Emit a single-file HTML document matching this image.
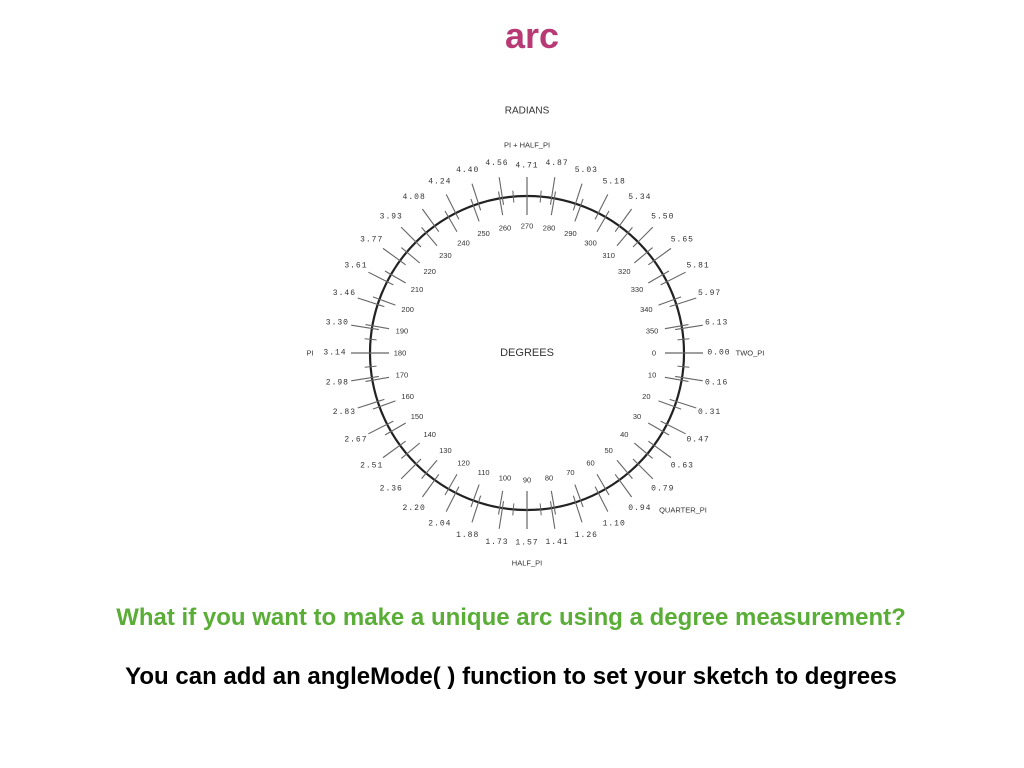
<!DOCTYPE html>
<html><head><meta charset="utf-8"><style>
body{margin:0;width:1024px;height:768px;background:#fff;overflow:hidden;font-family:"Liberation Sans",sans-serif}
.t{position:absolute;left:0;width:1024px;text-align:center;font-weight:bold}
</style></head><body>
<div class="t" style="top:15px;left:20px;font-size:36px;color:#b73a74">arc</div>
<svg width="1024" height="768" style="position:absolute;left:0;top:0">
<g transform="translate(527 353)" font-family="Liberation Mono, monospace" font-size="8" fill="#333" text-anchor="middle" dominant-baseline="central">
<circle r="157" fill="none" stroke="#222" stroke-width="2.2"/>
<g stroke="#666" stroke-width="1.2">
<line x1="138" y1="0" x2="176" y2="0" transform="rotate(0)"/><line x1="138" y1="0" x2="176" y2="0" transform="rotate(90)"/><line x1="138" y1="0" x2="176" y2="0" transform="rotate(180)"/><line x1="138" y1="0" x2="176" y2="0" transform="rotate(270)"/>
</g>
<g stroke="#666" stroke-width="1.1">
<line x1="140" x2="164" transform="rotate(10)"/><line x1="140" x2="164" transform="rotate(20)"/><line x1="140" x2="164" transform="rotate(30)"/><line x1="140" x2="164" transform="rotate(40)"/><line x1="140" x2="164" transform="rotate(50)"/><line x1="140" x2="164" transform="rotate(60)"/><line x1="140" x2="164" transform="rotate(70)"/><line x1="140" x2="164" transform="rotate(80)"/>
<line x1="140" x2="164" transform="rotate(100)"/><line x1="140" x2="164" transform="rotate(110)"/><line x1="140" x2="164" transform="rotate(120)"/><line x1="140" x2="164" transform="rotate(130)"/><line x1="140" x2="164" transform="rotate(140)"/><line x1="140" x2="164" transform="rotate(150)"/><line x1="140" x2="164" transform="rotate(160)"/><line x1="140" x2="164" transform="rotate(170)"/>
<line x1="140" x2="164" transform="rotate(190)"/><line x1="140" x2="164" transform="rotate(200)"/><line x1="140" x2="164" transform="rotate(210)"/><line x1="140" x2="164" transform="rotate(220)"/><line x1="140" x2="164" transform="rotate(230)"/><line x1="140" x2="164" transform="rotate(240)"/><line x1="140" x2="164" transform="rotate(250)"/><line x1="140" x2="164" transform="rotate(260)"/>
<line x1="140" x2="164" transform="rotate(280)"/><line x1="140" x2="164" transform="rotate(290)"/><line x1="140" x2="164" transform="rotate(300)"/><line x1="140" x2="164" transform="rotate(310)"/><line x1="140" x2="164" transform="rotate(320)"/><line x1="140" x2="164" transform="rotate(330)"/><line x1="140" x2="164" transform="rotate(340)"/><line x1="140" x2="164" transform="rotate(350)"/>
</g>
<g stroke="#666" stroke-width="1.1">
<line x1="150" x2="178" transform="rotate(9)"/><line x1="150" x2="178" transform="rotate(18)"/><line x1="150" x2="178" transform="rotate(27)"/><line x1="150" x2="178" transform="rotate(36)"/><line x1="150" x2="178" transform="rotate(45)"/><line x1="150" x2="178" transform="rotate(54)"/><line x1="150" x2="178" transform="rotate(63)"/><line x1="150" x2="178" transform="rotate(72)"/><line x1="150" x2="178" transform="rotate(81)"/>
<line x1="150" x2="178" transform="rotate(99)"/><line x1="150" x2="178" transform="rotate(108)"/><line x1="150" x2="178" transform="rotate(117)"/><line x1="150" x2="178" transform="rotate(126)"/><line x1="150" x2="178" transform="rotate(135)"/><line x1="150" x2="178" transform="rotate(144)"/><line x1="150" x2="178" transform="rotate(153)"/><line x1="150" x2="178" transform="rotate(162)"/><line x1="150" x2="178" transform="rotate(171)"/>
<line x1="150" x2="178" transform="rotate(189)"/><line x1="150" x2="178" transform="rotate(198)"/><line x1="150" x2="178" transform="rotate(207)"/><line x1="150" x2="178" transform="rotate(216)"/><line x1="150" x2="178" transform="rotate(225)"/><line x1="150" x2="178" transform="rotate(234)"/><line x1="150" x2="178" transform="rotate(243)"/><line x1="150" x2="178" transform="rotate(252)"/><line x1="150" x2="178" transform="rotate(261)"/>
<line x1="150" x2="178" transform="rotate(279)"/><line x1="150" x2="178" transform="rotate(288)"/><line x1="150" x2="178" transform="rotate(297)"/><line x1="150" x2="178" transform="rotate(306)"/><line x1="150" x2="178" transform="rotate(315)"/><line x1="150" x2="178" transform="rotate(324)"/><line x1="150" x2="178" transform="rotate(333)"/><line x1="150" x2="178" transform="rotate(342)"/><line x1="150" x2="178" transform="rotate(351)"/>
</g>
<g stroke="#666" stroke-width="1">
<line x1="151" x2="163" transform="rotate(5)"/><line x1="151" x2="163" transform="rotate(95)"/><line x1="151" x2="163" transform="rotate(185)"/><line x1="151" x2="163" transform="rotate(275)"/><line x1="151" x2="163" transform="rotate(355)"/><line x1="151" x2="163" transform="rotate(85)"/><line x1="151" x2="163" transform="rotate(175)"/><line x1="151" x2="163" transform="rotate(265)"/>
</g>
<g font-family="Liberation Sans, sans-serif" font-size="7.5">
<text x="127" y="0">0</text><text transform="rotate(10) translate(127 0) rotate(-10)">10</text><text transform="rotate(20) translate(127 0) rotate(-20)">20</text><text transform="rotate(30) translate(127 0) rotate(-30)">30</text><text transform="rotate(40) translate(127 0) rotate(-40)">40</text><text transform="rotate(50) translate(127 0) rotate(-50)">50</text><text transform="rotate(60) translate(127 0) rotate(-60)">60</text><text transform="rotate(70) translate(127 0) rotate(-70)">70</text><text transform="rotate(80) translate(127 0) rotate(-80)">80</text><text transform="rotate(90) translate(127 0) rotate(-90)">90</text>
<text transform="rotate(100) translate(127 0) rotate(-100)">100</text><text transform="rotate(110) translate(127 0) rotate(-110)">110</text><text transform="rotate(120) translate(127 0) rotate(-120)">120</text><text transform="rotate(130) translate(127 0) rotate(-130)">130</text><text transform="rotate(140) translate(127 0) rotate(-140)">140</text><text transform="rotate(150) translate(127 0) rotate(-150)">150</text><text transform="rotate(160) translate(127 0) rotate(-160)">160</text><text transform="rotate(170) translate(127 0) rotate(-170)">170</text><text transform="rotate(180) translate(127 0) rotate(-180)">180</text>
<text transform="rotate(190) translate(127 0) rotate(-190)">190</text><text transform="rotate(200) translate(127 0) rotate(-200)">200</text><text transform="rotate(210) translate(127 0) rotate(-210)">210</text><text transform="rotate(220) translate(127 0) rotate(-220)">220</text><text transform="rotate(230) translate(127 0) rotate(-230)">230</text><text transform="rotate(240) translate(127 0) rotate(-240)">240</text><text transform="rotate(250) translate(127 0) rotate(-250)">250</text><text transform="rotate(260) translate(127 0) rotate(-260)">260</text><text transform="rotate(270) translate(127 0) rotate(-270)">270</text>
<text transform="rotate(280) translate(127 0) rotate(-280)">280</text><text transform="rotate(290) translate(127 0) rotate(-290)">290</text><text transform="rotate(300) translate(127 0) rotate(-300)">300</text><text transform="rotate(310) translate(127 0) rotate(-310)">310</text><text transform="rotate(320) translate(127 0) rotate(-320)">320</text><text transform="rotate(330) translate(127 0) rotate(-330)">330</text><text transform="rotate(340) translate(127 0) rotate(-340)">340</text><text transform="rotate(350) translate(127 0) rotate(-350)">350</text>
</g>
<g letter-spacing="1">
<text x="192" y="0">0.00</text><text transform="rotate(9) translate(192 0) rotate(-9)">0.16</text><text transform="rotate(18) translate(192 0) rotate(-18)">0.31</text><text transform="rotate(27) translate(192 0) rotate(-27)">0.47</text><text transform="rotate(36) translate(192 0) rotate(-36)">0.63</text><text transform="rotate(45) translate(192 0) rotate(-45)">0.79</text><text transform="rotate(54) translate(192 0) rotate(-54)">0.94</text><text transform="rotate(63) translate(192 0) rotate(-63)">1.10</text><text transform="rotate(72) translate(192 0) rotate(-72)">1.26</text><text transform="rotate(81) translate(192 0) rotate(-81)">1.41</text>
<text transform="rotate(90) translate(190 0) rotate(-90)">1.57</text><text transform="rotate(99) translate(192 0) rotate(-99)">1.73</text><text transform="rotate(108) translate(192 0) rotate(-108)">1.88</text><text transform="rotate(117) translate(192 0) rotate(-117)">2.04</text><text transform="rotate(126) translate(192 0) rotate(-126)">2.20</text><text transform="rotate(135) translate(192 0) rotate(-135)">2.36</text><text transform="rotate(144) translate(192 0) rotate(-144)">2.51</text><text transform="rotate(153) translate(192 0) rotate(-153)">2.67</text><text transform="rotate(162) translate(192 0) rotate(-162)">2.83</text><text transform="rotate(171) translate(192 0) rotate(-171)">2.98</text>
<text transform="rotate(180) translate(192 0) rotate(-180)">3.14</text><text transform="rotate(189) translate(192 0) rotate(-189)">3.30</text><text transform="rotate(198) translate(192 0) rotate(-198)">3.46</text><text transform="rotate(207) translate(192 0) rotate(-207)">3.61</text><text transform="rotate(216) translate(192 0) rotate(-216)">3.77</text><text transform="rotate(225) translate(192 0) rotate(-225)">3.93</text><text transform="rotate(234) translate(192 0) rotate(-234)">4.08</text><text transform="rotate(243) translate(192 0) rotate(-243)">4.24</text><text transform="rotate(252) translate(192 0) rotate(-252)">4.40</text><text transform="rotate(261) translate(192 0) rotate(-261)">4.56</text>
<text transform="rotate(270) translate(187 0) rotate(-270)">4.71</text><text transform="rotate(279) translate(192 0) rotate(-279)">4.87</text><text transform="rotate(288) translate(192 0) rotate(-288)">5.03</text><text transform="rotate(297) translate(192 0) rotate(-297)">5.18</text><text transform="rotate(306) translate(192 0) rotate(-306)">5.34</text><text transform="rotate(315) translate(192 0) rotate(-315)">5.50</text><text transform="rotate(324) translate(192 0) rotate(-324)">5.65</text><text transform="rotate(333) translate(192 0) rotate(-333)">5.81</text><text transform="rotate(342) translate(192 0) rotate(-342)">5.97</text><text transform="rotate(351) translate(192 0) rotate(-351)">6.13</text>
</g>
<g font-family="Liberation Sans Narrow, Liberation Sans, sans-serif" font-size="7.5">
<text x="0" y="-208">PI + HALF_PI</text>
<text x="0" y="210">HALF_PI</text>
<text x="-217" y="0">PI</text>
<text x="223" y="0">TWO_PI</text>
<text x="156" y="157">QUARTER_PI</text>
</g>
<text x="0" y="0" font-family="Liberation Sans, sans-serif" font-size="11" fill="#333">DEGREES</text>
<text x="0" y="-242" font-family="Liberation Sans, sans-serif" font-size="10" fill="#333">RADIANS</text>
</g>
</svg>
<div class="t" style="top:604px;left:-1px;font-size:24px;color:#5aae37">What if you want to make a unique arc using a degree measurement?</div>
<div class="t" style="top:663px;left:-1px;font-size:24px;color:#000">You can add an angleMode( ) function to set your sketch to degrees</div>
</body></html>
